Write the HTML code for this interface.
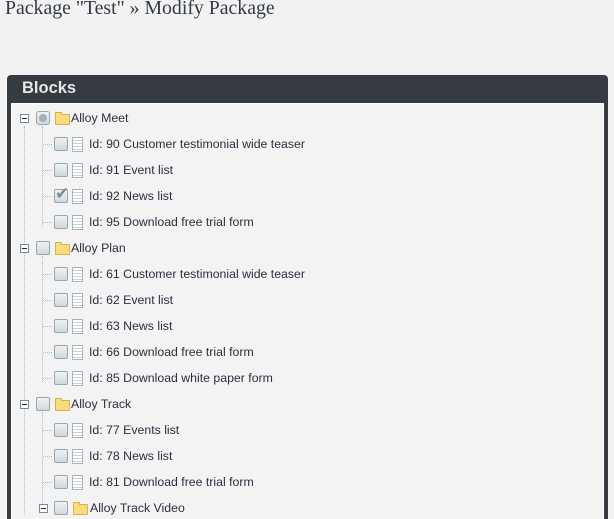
<!DOCTYPE html>
<html style="overflow:hidden;height:519px"><head><style>
body{margin:0;width:614px;height:519px;background:#f2f2f2;overflow:hidden;font-family:"Liberation Sans",sans-serif;position:relative}
h1{position:absolute;left:5px;top:-3px;margin:0;font:19.8px "Liberation Serif",serif;color:#333a45;white-space:nowrap}
.panel{position:absolute;left:7px;top:75px;width:601px;height:444px;background:#363a41;border-radius:4px 4px 0 0;overflow:hidden}
.hd{position:absolute;left:15px;top:4px;color:#e6e6e6;font-weight:bold;font-size:16.5px}
.inner{position:absolute;left:4px;top:28px;width:591px;height:440px;background:#f3f3f3;border:1px solid #fff}
.r{position:absolute;height:16px;font-size:12.3px;color:#2b2f3f;line-height:16px;white-space:nowrap;overflow:hidden;width:400px}
.cb{position:absolute;width:12px;height:12px;border:1px solid #9aa6ae;border-radius:2px;background:linear-gradient(#eef2f4,#cfd8de);top:1px}
.mn{position:absolute;width:7px;height:7px;border:1px solid #7a8a9a;background:#fff;top:4px}
.mn:after{content:"";position:absolute;left:1px;top:3px;width:5px;height:1px;background:#223}
.fo{position:absolute;width:13px;height:9px;background:#f7dd7e;border:1px solid #d9b24a;top:4px;border-radius:1px}
.fo:before{content:"";position:absolute;left:-1px;top:-3px;width:5px;height:2px;background:#f7dd7e;border:1px solid #d9b24a;border-bottom:none}
.dc{position:absolute;width:9px;height:13px;border:1px solid #a8b4bc;background:repeating-linear-gradient(#fff 0 2px,#c8d2d8 2px 3px);top:1px}
.t{position:absolute;top:0}
.vl{position:absolute;border-left:1px dotted #bbb}
.hl{position:absolute;border-top:1px dotted #bbb;width:9px}
</style></head><body>
<h1>Package "Test" » Modify Package</h1>
<div class="panel"><div class="hd">Blocks</div><div class="inner"></div></div>
<div class="vl" style="left:24px;top:126px;height:388px"></div>
<div class="vl" style="left:42px;top:126px;height:100px"></div>
<div class="vl" style="left:42px;top:256px;height:126px"></div>
<div class="vl" style="left:42px;top:412px;height:92px"></div>

<div class="r" style="left:0;top:110px"><span class="mn" style="left:20px"></span><span class="cb" style="left:36px;border-radius:3px"><span style="position:absolute;left:2px;top:2px;width:8px;height:8px;border-radius:50%;background:#a8b0bc"></span></span><span class="fo" style="left:55px"></span><span class="t" style="left:71px">Alloy Meet</span></div>
<div class="r" style="left:0;top:136px"><span class="hl" style="left:43px;top:8px"></span><span class="cb" style="left:54px"></span><span class="dc" style="left:72px"></span><span class="t" style="left:89px">Id: 90 Customer testimonial wide teaser</span></div>
<div class="r" style="left:0;top:162px"><span class="hl" style="left:43px;top:8px"></span><span class="cb" style="left:54px"></span><span class="dc" style="left:72px"></span><span class="t" style="left:89px">Id: 91 Event list</span></div>
<div class="r" style="left:0;top:188px"><span class="hl" style="left:43px;top:8px"></span><span class="cb" style="left:54px"></span><span style="position:absolute;left:55px;top:-3px;color:#7d8a94;font-size:17px;line-height:18px">✔</span><span class="dc" style="left:72px"></span><span class="t" style="left:89px">Id: 92 News list</span></div>
<div class="r" style="left:0;top:214px"><span class="hl" style="left:43px;top:8px"></span><span class="cb" style="left:54px"></span><span class="dc" style="left:72px"></span><span class="t" style="left:89px">Id: 95 Download free trial form</span></div>
<div class="r" style="left:0;top:240px"><span class="mn" style="left:20px"></span><span class="cb" style="left:36px"></span><span class="fo" style="left:55px"></span><span class="t" style="left:71px">Alloy Plan</span></div>
<div class="r" style="left:0;top:266px"><span class="hl" style="left:43px;top:8px"></span><span class="cb" style="left:54px"></span><span class="dc" style="left:72px"></span><span class="t" style="left:89px">Id: 61 Customer testimonial wide teaser</span></div>
<div class="r" style="left:0;top:292px"><span class="hl" style="left:43px;top:8px"></span><span class="cb" style="left:54px"></span><span class="dc" style="left:72px"></span><span class="t" style="left:89px">Id: 62 Event list</span></div>
<div class="r" style="left:0;top:318px"><span class="hl" style="left:43px;top:8px"></span><span class="cb" style="left:54px"></span><span class="dc" style="left:72px"></span><span class="t" style="left:89px">Id: 63 News list</span></div>
<div class="r" style="left:0;top:344px"><span class="hl" style="left:43px;top:8px"></span><span class="cb" style="left:54px"></span><span class="dc" style="left:72px"></span><span class="t" style="left:89px">Id: 66 Download free trial form</span></div>
<div class="r" style="left:0;top:370px"><span class="hl" style="left:43px;top:8px"></span><span class="cb" style="left:54px"></span><span class="dc" style="left:72px"></span><span class="t" style="left:89px">Id: 85 Download white paper form</span></div>
<div class="r" style="left:0;top:396px"><span class="mn" style="left:20px"></span><span class="cb" style="left:36px"></span><span class="fo" style="left:55px"></span><span class="t" style="left:71px">Alloy Track</span></div>
<div class="r" style="left:0;top:422px"><span class="hl" style="left:43px;top:8px"></span><span class="cb" style="left:54px"></span><span class="dc" style="left:72px"></span><span class="t" style="left:89px">Id: 77 Events list</span></div>
<div class="r" style="left:0;top:448px"><span class="hl" style="left:43px;top:8px"></span><span class="cb" style="left:54px"></span><span class="dc" style="left:72px"></span><span class="t" style="left:89px">Id: 78 News list</span></div>
<div class="r" style="left:0;top:474px"><span class="hl" style="left:43px;top:8px"></span><span class="cb" style="left:54px"></span><span class="dc" style="left:72px"></span><span class="t" style="left:89px">Id: 81 Download free trial form</span></div>
<div class="r" style="left:0;top:500px"><span class="mn" style="left:39px"></span><span class="cb" style="left:54px"></span><span class="fo" style="left:73px"></span><span class="t" style="left:90px">Alloy Track Video</span></div>
</body></html>
